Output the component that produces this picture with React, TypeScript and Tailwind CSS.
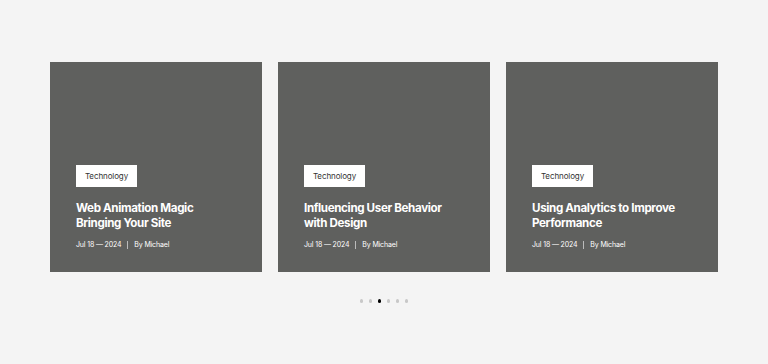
import React from "react";

const posts = [
  { title: ["Web Animation Magic", "Bringing Your Site"] },
  { title: ["Influencing User Behavior", "with Design"] },
  { title: ["Using Analytics to Improve", "Performance"] },
];

export default function App() {
  return (
    <div
      className="w-[768px] h-[364px] bg-[#f4f4f4] flex flex-col items-center pt-[62px]"
      style={{ fontFamily: "Inter, 'Noto Sans', sans-serif" }}
    >
      <div className="flex gap-[16px]">
        {posts.map((p, i) => (
          <div key={i} className="w-[212px] h-[210px] bg-[#5f605e] flex flex-col justify-end px-[26px] pb-[22px]">
            <div className="self-start w-[61px] h-[22px] bg-white flex items-center justify-center text-[8px] text-[#333] tracking-[-0.1px]">
              Technology
            </div>
            <div className="mt-[14px] text-white font-bold text-[11.6px] leading-[15px] tracking-[-0.35px]">
              {p.title.map((t, j) => (
                <div key={j}>{t}</div>
              ))}
            </div>
            <div className="mt-[9px] flex items-center text-[7px] text-white leading-[10px] tracking-[-0.15px]">
              <span>Jul 18 — 2024</span>
              <span className="mx-[6px] w-px h-[8px] bg-[#bbbbbb]" />
              <span>By Michael</span>
            </div>
          </div>
        ))}
      </div>
      <div className="mt-[27px] flex gap-[5.5px]">
        {[0, 1, 2, 3, 4, 5].map((d) => (
          <span
            key={d}
            className={d === 2 ? "w-[3.5px] h-[3.5px] rounded-full bg-black" : "w-[3.5px] h-[3.5px] rounded-full bg-[#c8c8c8]"}
          />
        ))}
      </div>
    </div>
  );
}
